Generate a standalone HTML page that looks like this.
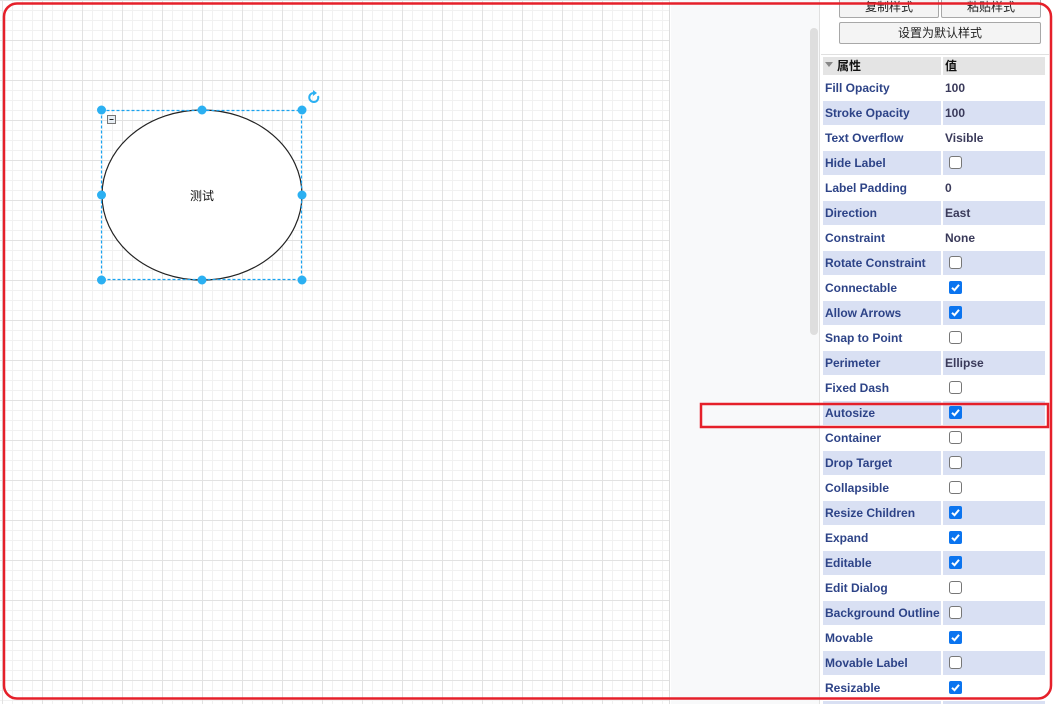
<!DOCTYPE html>
<html style="width:1055px;height:704px;overflow:hidden"><head><meta charset="utf-8"><style>
*{margin:0;padding:0;box-sizing:border-box}
body{width:1055px;height:704px;overflow:hidden;background:#fff;font-family:"Liberation Sans","Noto Sans CJK SC",sans-serif;position:relative}
#canvas{position:absolute;left:0;top:0;width:670px;height:704px;
background-color:#fff;
background-image:
linear-gradient(#e2e2e2 1px,transparent 1px),
linear-gradient(90deg,#e2e2e2 1px,transparent 1px),
linear-gradient(#f1f1f1 1px,transparent 1px),
linear-gradient(90deg,#f1f1f1 1px,transparent 1px);
background-size:40px 40px,40px 40px,10px 10px,10px 10px;
background-position:0 0,2px 0,0 0,2px 0;border-right:1px solid #dcdcdc}
#mid{position:absolute;left:671px;top:0;width:149px;height:704px;background:#f8f9fa;border-right:1px solid #e0e0e0}
#sb{position:absolute;left:810px;top:28px;width:8px;height:307px;background:#dedede;border-radius:4px}
#panel{position:absolute;left:821px;top:0;width:234px;height:704px;background:#fff}
.btn{position:absolute;height:21px;border:1px solid #a8a8a8;border-radius:2px;background:#f4f4f4;font-size:12px;text-align:center;line-height:19px;color:#222}
.sep{position:absolute;left:821px;top:54px;width:228px;height:1px;background:#e0e0e0}
.row{position:absolute;left:823px;width:222px;height:24px;font-size:12px;font-weight:bold;line-height:24px}
.row .n{position:absolute;left:0;width:118px;height:24px;padding-left:2px;color:#2d4387;white-space:nowrap;overflow:hidden}
.row .v{position:absolute;left:120px;width:102px;height:24px;padding-left:2px;color:#3a3a5a}
.row.b .n,.row.b .v{background:#d9e0f3}
.cb{position:absolute;left:6px;top:5px;width:13px;height:13px;border:1px solid #777;border-radius:3px;background:#fff}
.ck{position:absolute;left:6px;top:5px;width:13px;height:13px;border-radius:2px;background:#0b74ef}
.ck svg{position:absolute;left:0;top:0}
.hd{position:absolute;left:823px;top:57px;width:222px;height:18px;font-size:12px;font-weight:bold;line-height:18px;color:#111}
.hd .n{position:absolute;left:0;width:118px;height:18px;background:#e4e4e4;padding-left:14px}
.hd .v{position:absolute;left:120px;width:102px;height:18px;background:#e4e4e4;padding-left:2px}
</style></head><body>
<div id="canvas"></div>
<svg style="position:absolute;left:0;top:0" width="670" height="704">
<ellipse cx="202" cy="195" rx="100" ry="85" fill="#fff" stroke="#222" stroke-width="1.2"/>
<rect x="101.5" y="110.5" width="200" height="169" fill="none" stroke="#1aa3f0" stroke-width="1.2" stroke-dasharray="3,2"/>
<g fill="#2bb0f2">
<circle cx="101.5" cy="110" r="4.5"/><circle cx="202" cy="110" r="4.5"/><circle cx="302" cy="110" r="4.5"/>
<circle cx="101.5" cy="195" r="4.5"/><circle cx="302" cy="195" r="4.5"/>
<circle cx="101.5" cy="280" r="4.5"/><circle cx="202" cy="280" r="4.5"/><circle cx="302" cy="280" r="4.5"/>
</g>
<rect x="107.5" y="115.5" width="8" height="8" fill="#e8eef4" stroke="#777"/>
<line x1="109.5" y1="119.5" x2="113.5" y2="119.5" stroke="#222"/>
<path d="M318 96 A4.5 4.5 0 1 1 314 93" fill="none" stroke="#2bb0f2" stroke-width="2"/>
<path d="M313 90 L317 93 L313 96 Z" fill="#2bb0f2"/>
<text x="202" y="200" font-size="12" text-anchor="middle" font-family="Liberation Sans,Noto Sans CJK SC,sans-serif" fill="#111">测试</text>
</svg>
<div id="mid"></div><div id="sb"></div>
<div id="panel"></div>
<div class="btn" style="left:839px;top:-3px;width:100px">复制样式</div>
<div class="btn" style="left:941px;top:-3px;width:100px">粘贴样式</div>
<div class="btn" style="left:839px;top:22px;width:202px;height:22px;line-height:20px">设置为默认样式</div>
<div class="sep"></div>
<div class="hd"><div class="n">属性</div><div class="v">值</div></div>
<svg style="position:absolute;left:825px;top:62px" width="9" height="6"><path d="M0 0 L8 0 L4 5Z" fill="#888"/></svg>
<div id="rows"></div>
<script>
var C='<div class="ck"><svg width="13" height="13"><path d="M3 6.8 L5.5 9.2 L10 3.8" fill="none" stroke="#fff" stroke-width="2"/></svg></div>';
var U='<div class="cb"></div>';
var r=[["Fill Opacity","100"],["Stroke Opacity","100"],["Text Overflow","Visible"],["Hide Label",U],["Label Padding","0"],["Direction","East"],["Constraint","None"],["Rotate Constraint",U],["Connectable",C],["Allow Arrows",C],["Snap to Point",U],["Perimeter","Ellipse"],["Fixed Dash",U],["Autosize",C],["Container",U],["Drop Target",U],["Collapsible",U],["Resize Children",C],["Expand",C],["Editable",C],["Edit Dialog",U],["Background Outline",U],["Movable",C],["Movable Label",U],["Resizable",C]];
var h='';
r.forEach(function(x,i){h+='<div class="row'+(i%2?' b':'')+'" style="top:'+(76+i*25)+'px"><div class="n">'+x[0]+'</div><div class="v">'+x[1]+'</div></div>';});
h+='<div class="row b" style="top:701px;height:3px;overflow:hidden"><div class="n" style="height:3px"></div><div class="v" style="height:3px"></div></div>';
document.getElementById('rows').innerHTML=h;
</script>
<svg style="position:absolute;left:0;top:0" width="1055" height="704">
<rect x="4" y="3.5" width="1047" height="695" rx="13" fill="none" stroke="#e5202a" stroke-width="2.5"/>
<rect x="701" y="404" width="347" height="23" fill="none" stroke="#e5202a" stroke-width="2.5"/>
</svg>
</body></html>
